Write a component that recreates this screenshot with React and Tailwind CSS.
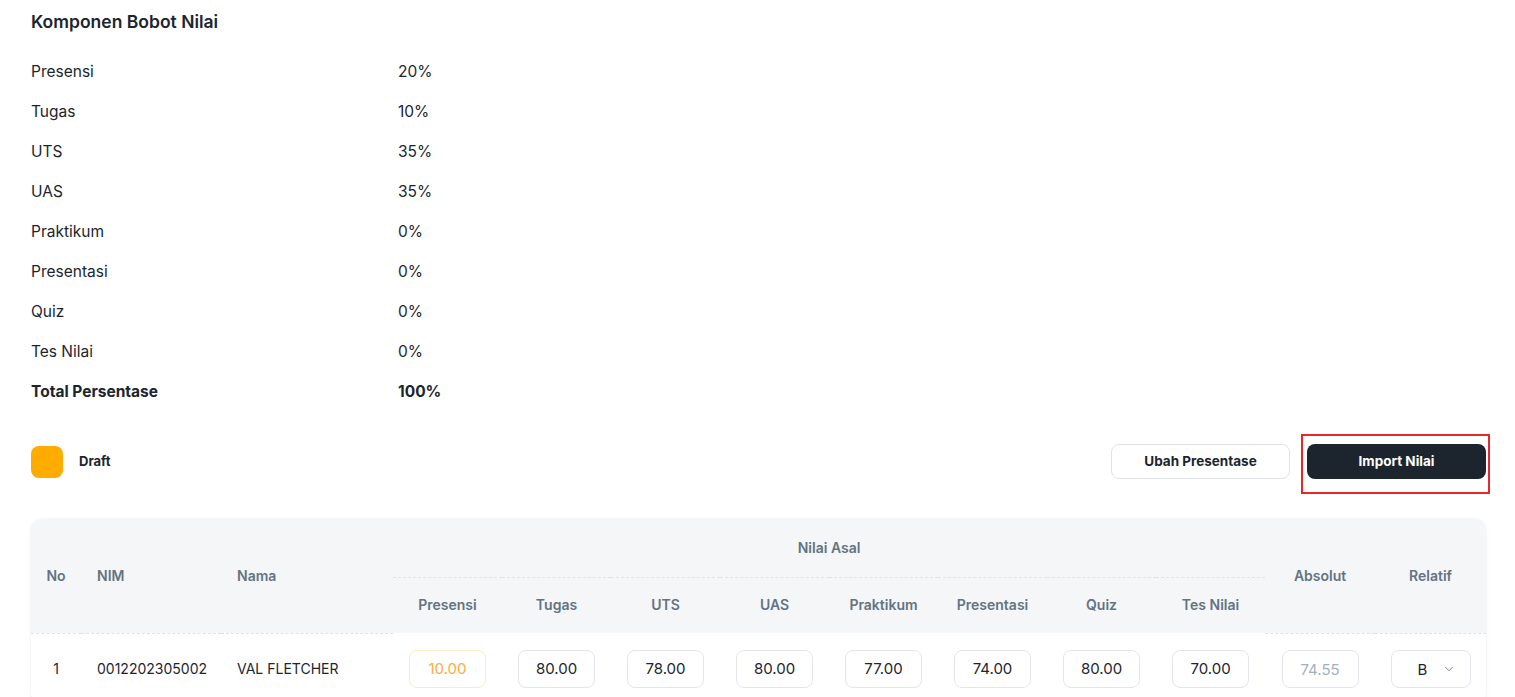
import { ChevronDown } from "lucide-react";

const BOBOT = [
  { label: "Presensi", value: "20%" },
  { label: "Tugas", value: "10%" },
  { label: "UTS", value: "35%" },
  { label: "UAS", value: "35%" },
  { label: "Praktikum", value: "0%" },
  { label: "Presentasi", value: "0%" },
  { label: "Quiz", value: "0%" },
  { label: "Tes Nilai", value: "0%" },
];

const KOMPONEN = ["Presensi", "Tugas", "UTS", "UAS", "Praktikum", "Presentasi", "Quiz", "Tes Nilai"];

const MAHASISWA = [
  {
    no: 1,
    nim: "0012202305002",
    nama: "VAL FLETCHER",
    nilai: ["10.00", "80.00", "78.00", "80.00", "77.00", "74.00", "80.00", "70.00"],
    absolut: "74.55",
    relatif: "B",
  },
];

function BobotRow({ label, value, bold }) {
  return (
    <div className={`flex h-10 items-center text-[15.5px] ${bold ? "font-bold text-[#1c252e]" : "text-[#1c252e]"}`}>
      <div className="w-[367px]">{label}</div>
      <div>{value}</div>
    </div>
  );
}

function NilaiInput({ value, warn }) {
  return (
    <div
      className={`mx-auto flex h-[38px] w-[77px] items-center justify-center rounded-lg border text-[15px] ${
        warn ? "border-[#fdebc8] text-[#ffab40]" : "border-[#e3e6ea] text-[#1c252e]"
      }`}
    >
      {value}
    </div>
  );
}

export default function App() {
  return (
    <div className="min-h-screen bg-white pl-[31px] pr-[29px] pt-[10px] font-['Inter',sans-serif] text-[#1c252e]">
      <h2 className="text-[17.5px] font-semibold leading-6">Komponen Bobot Nilai</h2>

      <div className="mt-[18px]">
        {BOBOT.map((b) => (
          <BobotRow key={b.label} label={b.label} value={b.value} />
        ))}
        <BobotRow label="Total Persentase" value="100%" bold />
      </div>

      {/* Status + actions */}
      <div className="mt-[32px] flex items-center justify-between">
        <div className="flex items-center gap-4">
          <div className="h-8 w-8 rounded-lg bg-[#ffab00]" />
          <span className="pt-px text-[13px] font-bold">Draft</span>
        </div>
        <div className="flex items-center gap-[17px]">
          <button className="h-[35px] w-[179px] rounded-lg border border-[#dfe3e8] bg-white text-[13.5px] font-bold text-[#1c252e]">
            Ubah Presentase
          </button>
          <div className="relative">
            <button className="h-[35px] w-[179px] rounded-lg bg-[#1c252e] text-[13.5px] font-bold text-white">
              Import Nilai
            </button>
            <div className="pointer-events-none absolute -bottom-[15px] -left-[6px] -right-[4px] -top-[10px] border-2 border-[#e8272b]" />
          </div>
        </div>
      </div>

      {/* Table */}
      <div className="mt-10 overflow-hidden rounded-xl bg-white shadow-[0_0_2px_rgba(145,158,171,0.25),0_4px_12px_-4px_rgba(145,158,171,0.12)]">
        <table className="w-full table-fixed border-collapse text-sm">
          <colgroup>
            <col className="w-[50px]" />
            <col className="w-[140px]" />
            <col className="w-[172px]" />
            {KOMPONEN.map((k) => (
              <col key={k} className="w-[109px]" />
            ))}
            <col className="w-[110px]" />
            <col />
          </colgroup>
          <thead className="bg-[#f4f6f8] text-[14px] font-semibold text-[#637381]">
            <tr className="h-[58px]">
              <th rowSpan={2} className="border-b border-dashed border-[#dfe3e8] text-center font-semibold">
                No
              </th>
              <th rowSpan={2} className="border-b border-dashed border-[#dfe3e8] pl-4 text-left font-semibold">
                NIM
              </th>
              <th rowSpan={2} className="border-b border-dashed border-[#dfe3e8] pl-4 text-left font-semibold">
                Nama
              </th>
              <th colSpan={8} className="border-b border-dashed border-[#dfe3e8] text-center font-semibold">
                Nilai Asal
              </th>
              <th rowSpan={2} className="border-b border-dashed border-[#dfe3e8] text-center font-semibold">
                Absolut
              </th>
              <th rowSpan={2} className="border-b border-dashed border-[#dfe3e8] text-center font-semibold">
                Relatif
              </th>
            </tr>
            <tr className="h-[56px]">
              {KOMPONEN.map((k) => (
                <th key={k} className="text-center font-semibold">
                  {k}
                </th>
              ))}
            </tr>
          </thead>
          <tbody>
            {MAHASISWA.map((m) => (
              <tr key={m.nim} className="h-[72px]">
                <td className="text-center">{m.no}</td>
                <td className="pl-4">{m.nim}</td>
                <td className="pl-4">{m.nama}</td>
                {m.nilai.map((n, i) => (
                  <td key={KOMPONEN[i]}>
                    <NilaiInput value={n} warn={i === 0} />
                  </td>
                ))}
                <td>
                  <div className="mx-auto flex h-[38px] w-[77px] items-center justify-center rounded-lg border border-[#e3e6ea] text-[15px] text-[#a6afb9]">
                    {m.absolut}
                  </div>
                </td>
                <td>
                  <div className="mx-auto flex h-[38px] w-[80px] items-center justify-between rounded-lg border border-[#e3e6ea] pl-[26px] pr-[14px] text-[15px]">
                    <span>{m.relatif}</span>
                    <ChevronDown className="h-3.5 w-3.5 text-[#637381]" strokeWidth={1.5} />
                  </div>
                </td>
              </tr>
            ))}
          </tbody>
        </table>
      </div>
    </div>
  );
}
